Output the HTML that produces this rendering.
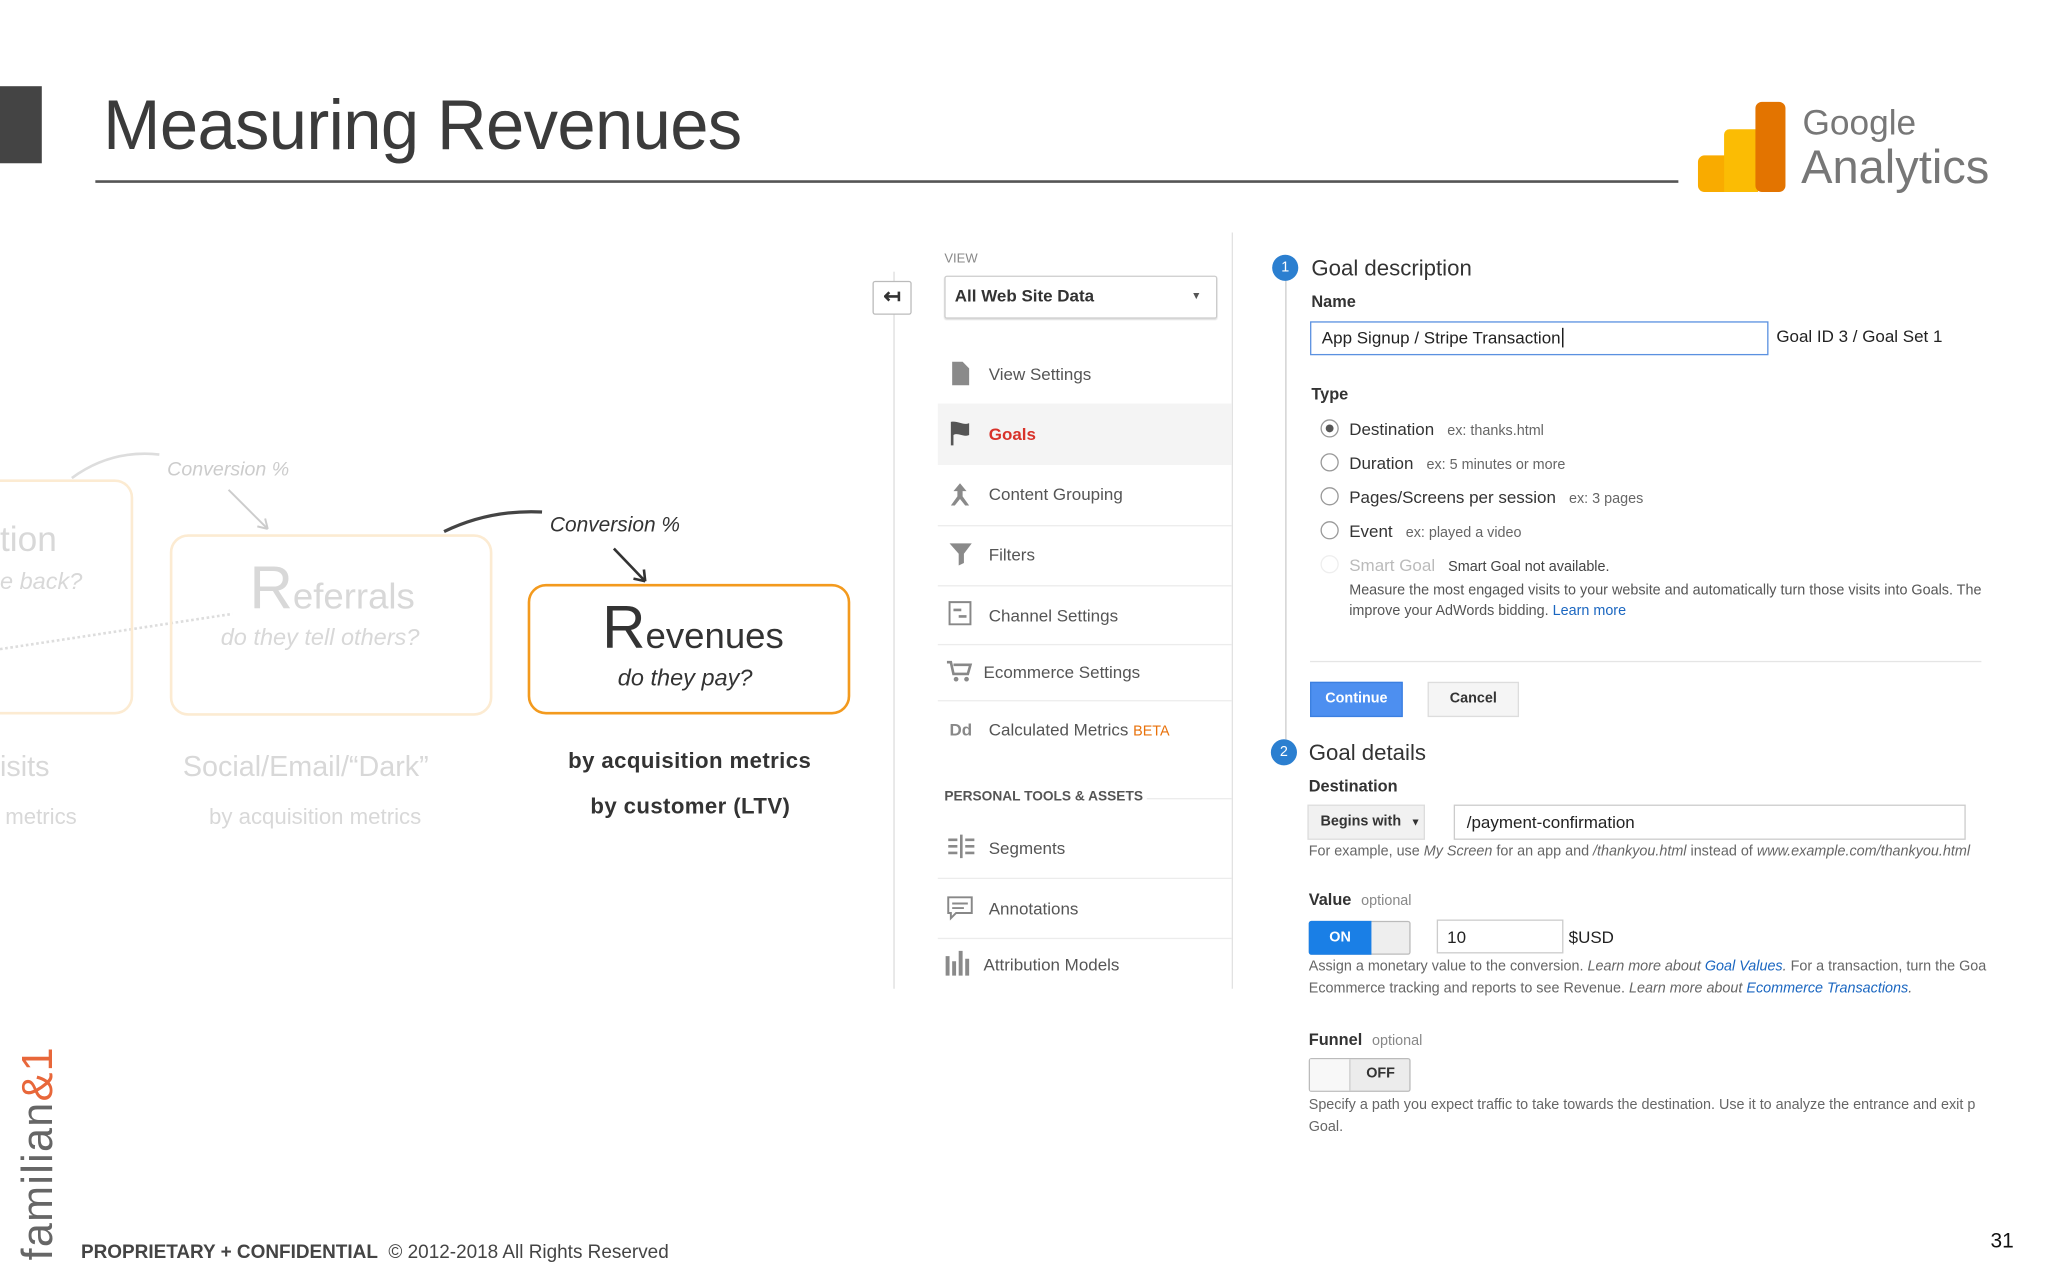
<!DOCTYPE html>
<html><head><meta charset="utf-8"><style>
html,body{margin:0;padding:0;background:#fff;width:2048px;height:1280px;overflow:hidden}
#s{position:absolute;left:0;top:0;width:1568px;height:980px;transform:scale(1.306122);transform-origin:0 0;font-family:"Liberation Sans",sans-serif;color:#333}
#s div,#s span.a{position:absolute;white-space:nowrap;line-height:1}
.mi{font-size:13px;color:#555}
.sep{height:1px;background:#ececec;left:718px;width:225px}
.ex{font-size:11px;color:#666;margin-left:10px}
.radio{width:12px;height:12px;border:1.5px solid #999;border-radius:50%;background:#fff}
.sm{font-size:11px;color:#666}
.lk{color:#1a66c0}
</style></head><body><div id="s">
<!-- header -->
<div style="left:0;top:66px;width:32px;height:59px;background:#444"></div>
<div style="left:79px;top:69px;font-size:54px;color:#3b3b3b;letter-spacing:-0.5px;transform:scaleX(0.975);transform-origin:0 0">Measuring Revenues</div>
<div style="left:73px;top:138px;width:1212px;height:2px;background:#555"></div>
<!-- GA logo -->
<div style="left:1300px;top:119px;width:24px;height:28px;background:#f9ab00;border-radius:5px 0 0 5px"></div>
<div style="left:1320px;top:99px;width:26px;height:48px;background:#fbbc04;border-radius:4px 0 0 0"></div>
<div style="left:1344px;top:78px;width:23px;height:69px;background:#e37400;border-radius:5px"></div>
<div style="left:1380px;top:81px;font-size:27px;color:#777">Google</div>
<div style="left:1379px;top:110px;font-size:36px;color:#777">Analytics</div>
<!-- diagram faded -->
<svg style="position:absolute;left:0;top:330px" width="680" height="200">
<path d="M55 36 Q85 14 122 18" stroke="#ddd" stroke-width="2" fill="none"/>
<path d="M175 45 L205 75" stroke="#ccc" stroke-width="1.5" fill="none"/><path d="M205 75 l-2 -8 M205 75 l-8 -2" stroke="#ccc" stroke-width="1.5"/>
<path d="M0 167 L178 140" stroke="#ddd" stroke-width="2" stroke-dasharray="2 2" fill="none"/>
<path d="M340 77 Q375 60 415 62" stroke="#444" stroke-width="2.5" fill="none"/>
<path d="M470 90 L494 115" stroke="#333" stroke-width="2" fill="none"/><path d="M494 115 l-1 -9 M494 115 l-9 -2" stroke="#333" stroke-width="2"/>
</svg>
<div style="left:-20px;top:367px;width:118px;height:176px;border:2px solid #fcebd2;border-radius:14px"></div>
<div style="left:0;top:400px;font-size:27px;color:#d8d8d8">tion</div>
<div style="left:0;top:436px;font-size:18px;font-style:italic;color:#d8d8d8">e back?</div>
<div style="left:128px;top:352px;font-size:15px;font-style:italic;color:#ccc">Conversion %</div>
<div style="left:130px;top:409px;width:243px;height:135px;border:2px solid #fcebd2;border-radius:14px"></div>
<div style="left:191px;top:427px;color:#d8d8d8"><span style="font-size:46px">R</span><span style="font-size:28px">eferrals</span></div>
<div style="left:169px;top:479px;font-size:18px;font-style:italic;color:#d8d8d8">do they tell others?</div>
<div style="left:0;top:576px;font-size:22px;color:#d8d8d8">isits</div>
<div style="left:140px;top:576px;font-size:22px;color:#d8d8d8">Social/Email/“Dark”</div>
<div style="left:4px;top:617px;font-size:17px;color:#d8d8d8">metrics</div>
<div style="left:160px;top:617px;font-size:17px;color:#d8d8d8">by acquisition metrics</div>
<!-- revenues -->
<div style="left:421px;top:395px;font-size:16px;font-style:italic;color:#333">Conversion %</div>
<div style="left:404px;top:447px;width:243px;height:96px;border:2.5px solid #f39a1e;border-radius:14px"></div>
<div style="left:461px;top:457px;color:#333"><span style="font-size:46px">R</span><span style="font-size:28px">evenues</span></div>
<div style="left:473px;top:510px;font-size:18px;font-style:italic;color:#333">do they pay?</div>
<div style="left:435px;top:574px;font-size:17px;font-weight:bold;color:#333;letter-spacing:0.3px">by acquisition metrics</div>
<div style="left:452px;top:609px;font-size:17px;font-weight:bold;color:#333;letter-spacing:0.3px">by customer (LTV)</div>
<!-- GA nav -->
<div style="left:684px;top:208px;width:1px;height:549px;background:#ddd"></div>
<div style="left:668px;top:215px;width:28px;height:24px;border:1px solid #bbb;border-radius:2px;background:#fff;text-align:center;line-height:24px;font-size:16px;font-weight:bold;color:#333">↤</div>
<div style="left:723px;top:194px;font-size:10px;color:#888">VIEW</div>
<div style="left:723px;top:211px;width:207px;height:31px;border:1px solid #ccc;border-radius:2px;box-shadow:0 1px 1px #ddd"></div>
<div style="left:731px;top:220px;font-size:13px;font-weight:bold;color:#333">All Web Site Data</div>
<div style="left:912px;top:223px;font-size:8px;color:#555">▼</div>
<div style="left:943px;top:178px;width:1px;height:579px;background:#e2e2e2"></div>
<div style="left:718px;top:309px;width:225px;height:47px;background:#f4f4f4"></div>
<div class="sep" style="top:402px"></div><div class="sep" style="top:448px"></div><div class="sep" style="top:493px"></div><div class="sep" style="top:536px"></div><div class="sep" style="top:611px;left:878px;width:65px"></div><div class="sep" style="top:672px"></div><div class="sep" style="top:718px"></div>
<svg style="position:absolute;left:720px;top:270px" width="40" height="490" fill="#8a8a8a">
<path d="M9 7h8l5 5v13H9z"/>
<path d="M8 53v18h2v-8c4-2 7 2 12 0v-9c-5 2-8-2-14-1z" fill="#555"/>
<path d="M15 100l-5 6h3v4l-5 7h3l4-5 4 5h3l-5-7v-4h3z"/>
<path d="M7 146h17l-6 8v7l-4 2v-9z"/>
<path d="M7 191h16v17H7z" fill="none" stroke="#888" stroke-width="1.5"/><path d="M10 196h6v2h-6zM14 201h6v2h-6z"/>
<path d="M5 237h3l2 9h11l2-7H10" fill="none" stroke="#888" stroke-width="2"/><circle cx="12" cy="250" r="1.8"/><circle cx="20" cy="250" r="1.8"/>
<text x="7" y="293" font-family="Liberation Sans" font-weight="bold" font-size="13" fill="#888">Dd</text>
<path d="M6 372h7v2H6zM6 377h7v2H6zM6 382h7v2H6zM19 372h7v2h-7zM19 377h7v2h-7zM19 382h7v2h-7zM15 369h2v18h-2z"/>
<path d="M6 417h18v12h-12l-4 4v-4H6z" fill="none" stroke="#888" stroke-width="1.5"/><path d="M9 421h12v1.5H9zM9 424.5h9v1.5H9z"/>
<path d="M4 462h3v15H4zM9 466h3v11H9zM14 458h3v19h-3zM19 464h3v13h-3z"/>
</svg>
<div class="mi" style="left:757px;top:280px">View Settings</div>
<div class="mi" style="left:757px;top:326px;color:#d8322a;font-weight:bold">Goals</div>
<div class="mi" style="left:757px;top:372px">Content Grouping</div>
<div class="mi" style="left:757px;top:418px">Filters</div>
<div class="mi" style="left:757px;top:465px">Channel Settings</div>
<div class="mi" style="left:753px;top:508px">Ecommerce Settings</div>
<div class="mi" style="left:757px;top:552px">Calculated Metrics <span style="font-size:11px;color:#e8710a">BETA</span></div>
<div style="left:723px;top:605px;font-size:10.5px;font-weight:bold;color:#555">PERSONAL TOOLS &amp; ASSETS</div>
<div class="mi" style="left:757px;top:643px">Segments</div>
<div class="mi" style="left:757px;top:689px">Annotations</div>
<div class="mi" style="left:753px;top:732px">Attribution Models</div>
<!-- form -->
<div style="left:984px;top:214px;width:1px;height:352px;background:#ccc"></div>
<div style="left:974px;top:195px;width:20px;height:20px;border-radius:50%;background:#2b7fd0;color:#fff;font-size:11px;text-align:center;line-height:20px">1</div>
<div style="left:1004px;top:197px;font-size:17px;color:#333">Goal description</div>
<div style="left:1004px;top:225px;font-size:12.5px;font-weight:bold;color:#333">Name</div>
<div style="left:1003px;top:246px;width:351px;height:26px;border:1.5px solid #5b91e0;box-sizing:border-box"></div>
<div style="left:1012px;top:252px;font-size:13px;color:#222">App Signup / Stripe Transaction<span style="border-left:1px solid #000;margin-left:1px"></span></div>
<div style="left:1360px;top:251px;font-size:13px;color:#222">Goal ID 3 / Goal Set 1</div>
<div style="left:1004px;top:296px;font-size:12.5px;font-weight:bold;color:#333">Type</div>
<div class="radio" style="left:1011px;top:321px"><div style="left:3px;top:3px;width:6px;height:6px;border-radius:50%;background:#555"></div></div>
<div class="radio" style="left:1011px;top:347px"></div>
<div class="radio" style="left:1011px;top:373px"></div>
<div class="radio" style="left:1011px;top:399px"></div>
<div class="radio" style="left:1011px;top:425px;border-color:#eee"></div>
<div style="left:1033px;top:322px;font-size:13px;color:#333">Destination<span class="ex">ex: thanks.html</span></div>
<div style="left:1033px;top:348px;font-size:13px;color:#333">Duration<span class="ex">ex: 5 minutes or more</span></div>
<div style="left:1033px;top:374px;font-size:13px;color:#333">Pages/Screens per session<span class="ex">ex: 3 pages</span></div>
<div style="left:1033px;top:400px;font-size:13px;color:#333">Event<span class="ex">ex: played a video</span></div>
<div style="left:1033px;top:426px;font-size:13px;color:#bbb">Smart Goal<span class="ex" style="color:#444">Smart Goal not available.</span></div>
<div class="sm" style="left:1033px;top:447px;color:#555">Measure the most engaged visits to your website and automatically turn those visits into Goals. The</div>
<div class="sm" style="left:1033px;top:463px;color:#555">improve your AdWords bidding. <span class="lk">Learn more</span></div>
<div style="left:1003px;top:506px;width:514px;height:1px;background:#e5e5e5"></div>
<div style="left:1003px;top:522px;width:71px;height:27px;background:#4d8ff0;border:1px solid #3b7fe0;box-sizing:border-box;color:#fff;font-size:11px;font-weight:bold;text-align:center;line-height:25px">Continue</div>
<div style="left:1093px;top:522px;width:70px;height:27px;background:#f5f5f5;border:1px solid #ddd;box-sizing:border-box;color:#333;font-size:11px;font-weight:bold;text-align:center;line-height:25px">Cancel</div>
<div style="left:973px;top:566px;width:20px;height:20px;border-radius:50%;background:#2b7fd0;color:#fff;font-size:11px;text-align:center;line-height:20px">2</div>
<div style="left:1002px;top:568px;font-size:17px;color:#333">Goal details</div>
<div style="left:1002px;top:596px;font-size:12.5px;font-weight:bold;color:#333">Destination</div>
<div style="left:1001px;top:616px;width:90px;height:27px;background:#f1f1f1;border:1px solid #ddd;box-sizing:border-box"></div>
<div style="left:1011px;top:624px;font-size:11px;font-weight:bold;color:#333">Begins with <span style="font-size:8px;margin-left:4px">▼</span></div>
<div style="left:1113px;top:616px;width:392px;height:27px;border:1px solid #ccc;box-sizing:border-box"></div>
<div style="left:1123px;top:623px;font-size:13px;color:#222">/payment-confirmation</div>
<div class="sm" style="left:1002px;top:647px">For example, use <i>My Screen</i> for an app and <i>/thankyou.html</i> instead of <i>www.example.com/thankyou.html</i></div>
<div style="left:1002px;top:683px;font-size:12.5px;font-weight:bold;color:#333">Value <span style="font-size:11px;font-weight:normal;color:#888;margin-left:4px">optional</span></div>
<div style="left:1002px;top:705px;width:78px;height:26px;border:1px solid #bbb;box-sizing:border-box;background:#eee;border-radius:2px"></div>
<div style="left:1002px;top:705px;width:48px;height:26px;background:#1a7fe6;color:#fff;font-size:11px;font-weight:bold;text-align:center;line-height:26px;border-radius:2px 0 0 2px">ON</div>
<div style="left:1100px;top:704px;width:97px;height:26px;border:1px solid #ccc;box-sizing:border-box"></div>
<div style="left:1108px;top:711px;font-size:13px;color:#222">10</div>
<div style="left:1201px;top:711px;font-size:13px;color:#222">$USD</div>
<div class="sm" style="left:1002px;top:735px">Assign a monetary value to the conversion. <i>Learn more about <span class="lk">Goal Values</span>.</i> For a transaction, turn the Goa</div>
<div class="sm" style="left:1002px;top:752px">Ecommerce tracking and reports to see Revenue. <i>Learn more about <span class="lk">Ecommerce Transactions</span>.</i></div>
<div style="left:1002px;top:790px;font-size:12.5px;font-weight:bold;color:#333">Funnel <span style="font-size:11px;font-weight:normal;color:#888;margin-left:4px">optional</span></div>
<div style="left:1002px;top:810px;width:78px;height:26px;border:1px solid #bbb;box-sizing:border-box;background:#ececec;border-radius:2px"></div>
<div style="left:1003px;top:811px;width:30px;height:24px;background:#f8f8f8;border-right:1px solid #ccc"></div>
<div style="left:1046px;top:817px;font-size:11px;font-weight:bold;color:#333">OFF</div>
<div class="sm" style="left:1002px;top:841px">Specify a path you expect traffic to take towards the destination. Use it to analyze the entrance and exit p</div>
<div class="sm" style="left:1002px;top:858px">Goal.</div>
<!-- footer -->
<div style="left:12px;top:965px;transform:rotate(-90deg);transform-origin:0 0;font-size:33px;color:#666;letter-spacing:1px">familian<span style="color:#e8673a">&amp;1</span></div>
<div style="left:62px;top:952px;font-size:14.5px;color:#444"><b style="font-weight:600">PROPRIETARY + CONFIDENTIAL</b> &nbsp;© 2012-2018 All Rights Reserved</div>
<div style="left:1524px;top:943px;font-size:16px;color:#111">31</div>
</div></body></html>
